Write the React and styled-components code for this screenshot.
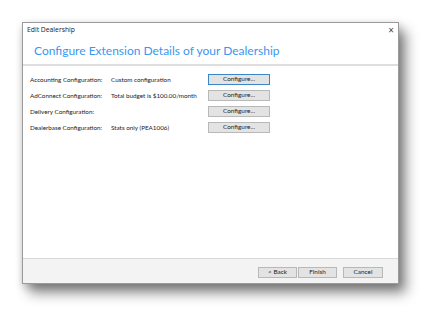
import React from 'react';
import styled, { createGlobalStyle } from 'styled-components';

const Global = createGlobalStyle`
  html, body { margin: 0; padding: 0; background: #ffffff; }
  body { font-family: Lato, "Open Sans", sans-serif; }
`

const Page = styled.div`
  width: 441px;
  height: 326px;
  padding: 22px 0 0 22px;
  box-sizing: border-box;
  background: #ffffff;
`

const Window = styled.div`
  width: 377px;
  height: 262px;
  box-sizing: border-box;
  border: 1px solid #9a9a9a;
  background: #ffffff;
  display: flex;
  flex-direction: column;
  box-shadow: 7px 9px 12px rgba(0, 0, 0, 0.45), 1px 3px 8px rgba(0, 0, 0, 0.2);
`

const TitleBar = styled.div`
  height: 13px;
  display: flex;
  align-items: center;
  justify-content: space-between;
  padding: 0 4px 0 4px;
  font-family: "Open Sans", sans-serif;
  font-size: 6.8px;
  color: #222;
`

const Close = styled.span`
  font-size: 10px;
  color: #444;
  line-height: 1;
`

const Header = styled.div`
  height: 28px;
  display: flex;
  align-items: center;
  padding-left: 11px;
  border-bottom: 2px solid #dedede;
`

const Heading = styled.h1`
  margin: 0;
  font-family: Lato, "Open Sans", sans-serif;
  font-weight: 400;
  font-size: 12px;
  color: #3a97f0;
`

const Content = styled.div`
  flex: 1;
  padding: 8px 0 0 7px;
  display: flex;
  flex-direction: column;
  gap: 5px;
`

const Row = styled.div`
  display: grid;
  grid-template-columns: 81px 97px 62px;
  align-items: center;
  height: 11px;
  font-size: 6.3px;
  color: #222;
`

const Btn = styled.button`
  height: 11px;
  width: ${p => p.w || 62}px;
  padding: 0;
  margin: 0;
  box-sizing: border-box;
  border: 1px solid ${p => (p.focused ? '#3b86c8' : '#b8b8b8')};
  background: #e3e3e3;
  font-family: Lato, "Open Sans", sans-serif;
  font-size: 6.4px;
  color: #222;
  line-height: 1;
`

const Footer = styled.div`
  height: 25px;
  border-top: 1px solid #d9d9d9;
  background: #f3f3f3;
  display: flex;
  justify-content: flex-end;
  align-items: flex-start;
  padding: 8px 15px 0 0;
  box-sizing: border-box;
  gap: 1px;
`

const Spacer = styled.div`
  width: 4px;
`

const rows = [
  ['Accounting Configuration:', 'Custom configuration', true],
  ['AdConnect Configuration:', 'Total budget is $100.00/month', false],
  ['Delivery Configuration:', '', false],
  ['Dealerbase Configuration:', 'Stats only (PEA1006)', false],
]

export default function App() {
  return (
    <Page>
      <Global />
      <Window>
        <TitleBar>
          <span>Edit Dealership</span>
          <Close>×</Close>
        </TitleBar>
        <Header>
          <Heading>Configure Extension Details of your Dealership</Heading>
        </Header>
        <Content>
          {rows.map(([label, value, focused]) => (
            <Row key={label}>
              <span>{label}</span>
              <span>{value}</span>
              <Btn focused={focused}>Configure...</Btn>
            </Row>
          ))}
        </Content>
        <Footer>
          <Btn w={39}>&lt; Back</Btn>
          <Btn w={39}>Finish</Btn>
          <Spacer />
          <Btn w={40}>Cancel</Btn>
        </Footer>
      </Window>
    </Page>
  );
}
